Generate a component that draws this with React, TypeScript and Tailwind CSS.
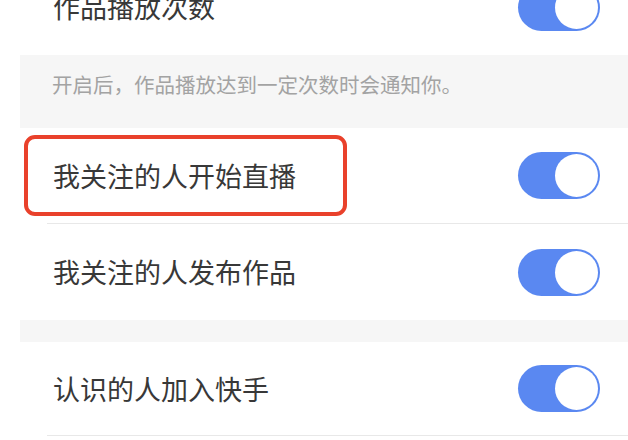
import React from 'react';

const Toggle = () => (
  <div className="flex h-[47px] w-[82px] shrink-0 items-center justify-end rounded-full bg-[#5a88f1] p-[2px]">
    <div className="h-[43px] w-[43px] rounded-full bg-white" />
  </div>
);

const Row = ({ label, divider = true, height = 'h-[96px]' }: { label: string; divider?: boolean; height?: string }) => (
  <div className="bg-white pl-[27px]">
    <div className={`flex ${height} items-center justify-between pl-[6px] pr-[28px] ${divider ? 'border-b border-[#e8e8e8]' : ''}`}>
      <span className="text-[27px] leading-[32px] text-[#383838]">{label}</span>
      <Toggle />
    </div>
  </div>
);

const App = () => {
  return (
    <div
      className="relative h-[440px] w-[628px] overflow-hidden bg-white pl-[20px]"
      style={{ fontFamily: '"Noto Sans CJK SC", "Noto Sans", sans-serif' }}
    >
      <div className="-mt-[41px]">
        <Row label="作品播放次数" divider={false} />
        <div className="h-[73px] bg-[#f6f6f6] pl-[32px] pt-[19px]">
          <p className="text-[20.5px] leading-[20px] text-[#a3a3a3]">开启后，作品播放达到一定次数时会通知你。</p>
        </div>
        <Row label="我关注的人开始直播" />
        <Row label="我关注的人发布作品" divider={false} />
        <div className="h-[22px] bg-[#f6f6f6]" />
        <Row label="认识的人加入快手" height="h-[94px]" />
      </div>

      {/* annotation box */}
      <div className="absolute left-[24px] top-[135px] h-[81px] w-[323px] rounded-[11px] border-[4px] border-[#e9412b]" />
    </div>
  );
};

export default App;
